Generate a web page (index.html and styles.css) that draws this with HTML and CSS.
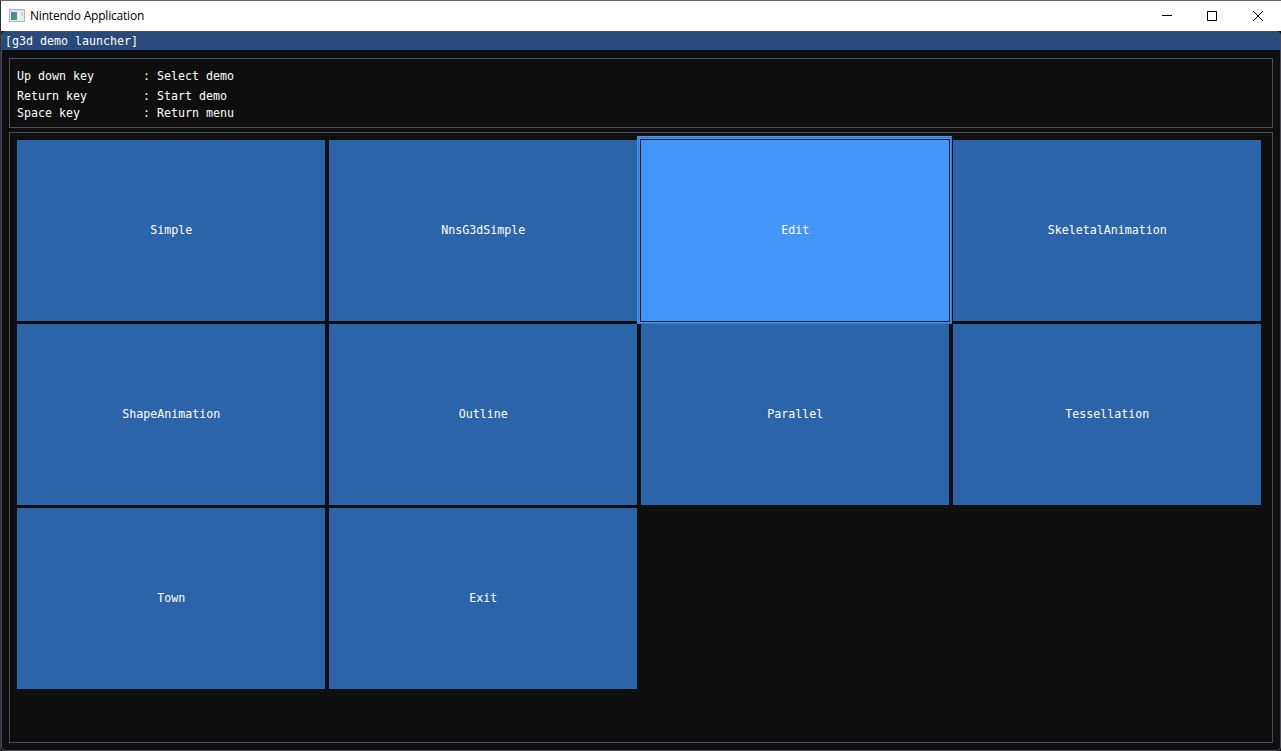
FILE: index.html
```html
<!DOCTYPE html>
<html lang="en">
<head>
<meta charset="utf-8">
<title>Nintendo Application</title>
<link rel="stylesheet" href="styles.css">
</head>
<body>
<div class="window">
  <header class="titlebar">
    <svg class="app-icon" width="16" height="14" viewBox="0 0 16 14" shape-rendering="crispEdges">
      <defs><linearGradient id="pane" x1="0" y1="0" x2="1" y2="1"><stop offset="0" stop-color="#4b79b0"/><stop offset="1" stop-color="#48a56f"/></linearGradient></defs>
      <rect width="16" height="13" fill="#b0b5ba"/>
      <rect x="1" y="1" width="14" height="1" fill="#d5d9dd"/>
      <rect x="1" y="2" width="14" height="10" fill="#e9ecee"/>
      <rect x="2" y="3" width="6" height="8" fill="url(#pane)"/>
      <rect x="9" y="3" width="2" height="8" fill="#f6f8f9"/>
      <rect x="12" y="3" width="2" height="4" fill="#c5d9d5"/>
    </svg>
    <span class="app-name">Nintendo Application</span>
    <div class="controls">
      <svg width="10" height="10" viewBox="0 0 10 10"><path d="M0 4.5H10" stroke="#000" fill="none"/></svg>
      <svg width="10" height="10" viewBox="0 0 10 10"><path d="M.5.5H9.5V9.5H.5Z" stroke="#000" fill="none"/></svg>
      <svg width="10" height="10" viewBox="0 0 10 10"><path d="M0 0L10 10M10 0L0 10" stroke="#000" fill="none"/></svg>
    </div>
  </header>
  <main class="client">
    <h1 class="caption">[g3d demo launcher]</h1>
    <section class="panel help">
      <div class="row first"><span class="key">Up down key</span><span>: Select demo</span></div>
      <div class="row"><span class="key">Return key</span><span>: Start demo</span></div>
      <div class="row"><span class="key">Space key</span><span>: Return menu</span></div>
    </section>
    <section class="panel demos">
      <button class="demo">Simple</button>
      <button class="demo">NnsG3dSimple</button>
      <button class="demo selected">Edit</button>
      <button class="demo">SkeletalAnimation</button>
      <button class="demo">ShapeAnimation</button>
      <button class="demo">Outline</button>
      <button class="demo">Parallel</button>
      <button class="demo">Tessellation</button>
      <button class="demo">Town</button>
      <button class="demo">Exit</button>
    </section>
  </main>
</div>
</body>
</html>
```
FILE: styles.css
```css
* { box-sizing: border-box; }
body { margin: 0; background: #0e0e0e; overflow: hidden; }
.window {
  width: 1281px;
  height: 751px;
  display: flex;
  flex-direction: column;
  border-top: 1px solid #67656d;
  border-left: 1px solid #30333c;
}
.titlebar {
  flex: 0 0 30px;
  display: flex;
  align-items: center;
  padding-left: 8px;
  background: #fff;
  color: #000;
  font: 12px/30px "Open Sans", "Noto Sans", sans-serif;
}
.app-icon { display: block; margin-right: 5px; }
.app-name { letter-spacing: -0.2px; }
.controls { margin-left: auto; display: flex; gap: 35px; padding-right: 18px; }
.controls svg { display: block; }
.controls svg:last-child { margin-left: 1px; }
.client {
  flex: 1;
  display: flex;
  flex-direction: column;
  border: 1px solid #4b4b5b;
  border-radius: 4px;
  background: #0e0e0e;
  overflow: hidden;
  color: #fff;
  font: 11.63px/13px "DejaVu Sans Mono", monospace;
}
.caption {
  flex: 0 0 18px;
  margin: 0;
  padding: 3px 3px 0;
  background: #294a7a;
  font: inherit;
}
.panel { margin: 0 7px; border: 1px solid #4f4d58; }
.help { flex: 0 0 70px; margin-top: 8px; padding: 11px 7px 0; }
.row { display: flex; height: 17px; white-space: pre; }
.row.first { height: 20px; }
.key { width: 126px; }
.demos {
  flex: 0 0 611px;
  margin-top: 4px;
  padding: 7px;
  display: grid;
  grid-template-columns: repeat(4, 308px);
  grid-auto-rows: 181px;
  gap: 3px 4px;
  align-content: start;
}
.demo {
  margin: 0;
  padding: 0 0 0 0.4px;
  border: 0;
  background: #2b64a8;
  color: #fff;
  font: inherit;
}
.demo.selected {
  z-index: 1;
  background: #4296fa;
  box-shadow: 0 0 0 1px #0f1a29, 0 0 0 2px #4296fa, 0 0 0 3px #357bcd, 0 0 0 4px #4296fa;
  clip-path: inset(-4px -3px -3px -4px);
}
```
